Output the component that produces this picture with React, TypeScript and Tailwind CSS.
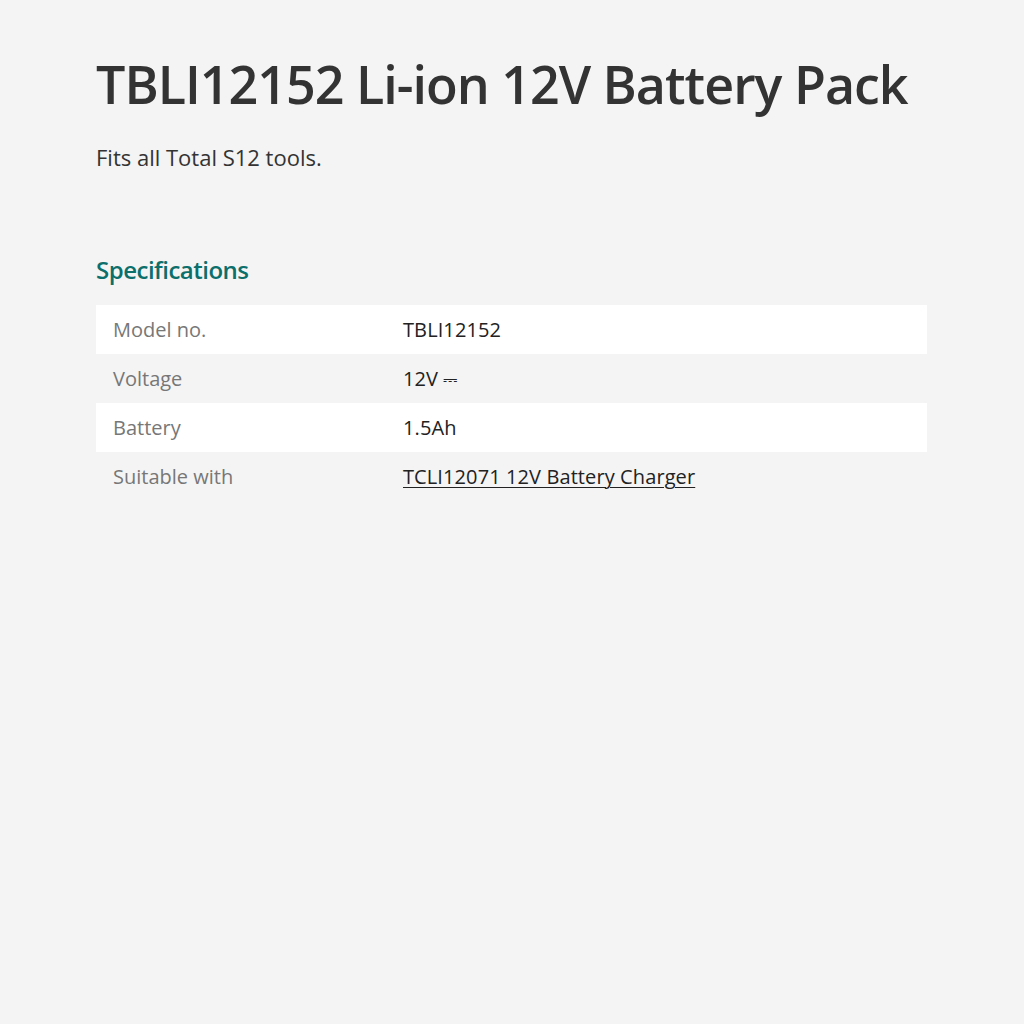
import React from "react";

const rows: { label: string; value: React.ReactNode; white: boolean }[] = [
  { label: "Model no.", value: "TBLI12152", white: true },
  {
    label: "Voltage",
    value: (
      <span>
        12V <span className="text-[18px]">⎓</span>
      </span>
    ),
    white: false,
  },
  { label: "Battery", value: "1.5Ah", white: true },
  {
    label: "Suitable with",
    value: <a className="underline underline-offset-[3px] decoration-1">TCLI12071 12V Battery Charger</a>,
    white: false,
  },
];

export default function App() {
  return (
    <div
      className="min-h-screen w-full bg-[#f4f4f4] px-[96px] pt-[50px]"
      style={{ fontFamily: '"Open Sans", "Noto Sans", sans-serif' }}
    >
      <h1 className="text-[52px] leading-[68px] font-semibold text-[#333333] tracking-[-1px]">
        TBLI12152 Li-ion 12V Battery Pack
      </h1>
      <p className="mt-[24px] text-[22px] leading-[30px] text-[#333333]">Fits all Total S12 tools.</p>
      <h2 className="mt-[82px] text-[24px] leading-[32px] font-semibold text-[#0b6f6c] tracking-[-0.5px]">
        Specifications
      </h2>
      <div className="mt-[19px] w-[831px] text-[20px]">
        {rows.map((r) => (
          <div key={r.label} className={`flex h-[49px] items-center ${r.white ? "bg-white" : ""}`}>
            <div className="w-[307px] pl-[17px] text-[#777777]">{r.label}</div>
            <div className="text-[#222222] tracking-[0.1px]">{r.value}</div>
          </div>
        ))}
      </div>
    </div>
  );
}
